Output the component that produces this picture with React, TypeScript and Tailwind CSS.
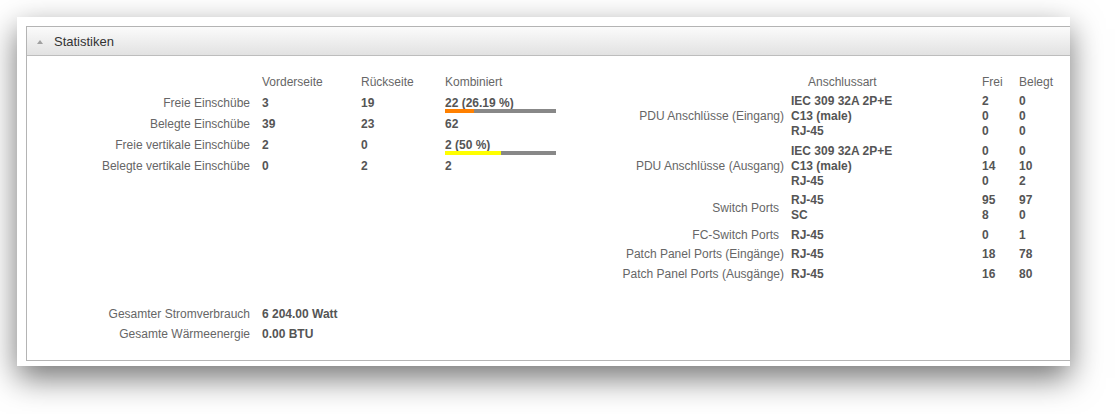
import React from 'react';

type PortRow = {
  label: string;
  paren: boolean;
  items: { type: string; free: string; used: string }[];
};

const bayRows = [
  { label: 'Freie Einschübe', front: '3', back: '19', total: '22 (26.19 %)', bar: 26.19, color: 'bg-[#ff8000]' },
  { label: 'Belegte Einschübe', front: '39', back: '23', total: '62' },
  { label: 'Freie vertikale Einschübe', front: '2', back: '0', total: '2 (50 %)', bar: 50, color: 'bg-[#ffff00]' },
  { label: 'Belegte vertikale Einschübe', front: '0', back: '2', total: '2' },
];

const portRows: PortRow[] = [
  {
    label: 'PDU Anschlüsse (Eingang)',
    paren: true,
    items: [
      { type: 'IEC 309 32A 2P+E', free: '2', used: '0' },
      { type: 'C13 (male)', free: '0', used: '0' },
      { type: 'RJ-45', free: '0', used: '0' },
    ],
  },
  {
    label: 'PDU Anschlüsse (Ausgang)',
    paren: true,
    items: [
      { type: 'IEC 309 32A 2P+E', free: '0', used: '0' },
      { type: 'C13 (male)', free: '14', used: '10' },
      { type: 'RJ-45', free: '0', used: '2' },
    ],
  },
  {
    label: 'Switch Ports',
    paren: false,
    items: [
      { type: 'RJ-45', free: '95', used: '97' },
      { type: 'SC', free: '8', used: '0' },
    ],
  },
  { label: 'FC-Switch Ports', paren: false, items: [{ type: 'RJ-45', free: '0', used: '1' }] },
  { label: 'Patch Panel Ports (Eingänge)', paren: true, items: [{ type: 'RJ-45', free: '18', used: '78' }] },
  { label: 'Patch Panel Ports (Ausgänge)', paren: true, items: [{ type: 'RJ-45', free: '16', used: '80' }] },
];

function BayTable() {
  return (
    <div className="grid grid-cols-[235px_99px_84px_111px] auto-rows-[21px] shrink-0">
      <div />
      <div className="flex items-center">Vorderseite</div>
      <div className="flex items-center">Rückseite</div>
      <div className="flex items-center">Kombiniert</div>
      {bayRows.map((r) => (
        <React.Fragment key={r.label}>
          <div className="flex items-center justify-end pr-[12px] whitespace-nowrap">{r.label}</div>
          <div className="flex items-center font-bold text-[#555555]">{r.front}</div>
          <div className="flex items-center font-bold text-[#555555]">{r.back}</div>
          {r.bar !== undefined ? (
            <div className="flex flex-col pt-[3px] font-bold text-[#555555]">
              <span>{r.total}</span>
              <div className="mt-[-2px] flex h-[4px] w-[111px] bg-[#888888]">
                <div className={`h-full ${r.color}`} style={{ width: `${r.bar}%` }} />
              </div>
            </div>
          ) : (
            <div className="flex items-center font-bold text-[#555555]">{r.total}</div>
          )}
        </React.Fragment>
      ))}
    </div>
  );
}

function PortTable() {
  return (
    <div className="grid grid-cols-[235px_191px_37px_60px] shrink-0">
      <div className="h-[20px]" />
      <div className="flex h-[20px] items-center pl-[17px]">Anschlussart</div>
      <div className="flex h-[20px] items-center">Frei</div>
      <div className="flex h-[20px] items-center">Belegt</div>
      {portRows.map((r) => (
        <React.Fragment key={r.label}>
          <div
            className={`flex items-center justify-end whitespace-nowrap pt-[2px] pb-[2.5px] ${
              r.paren ? 'pr-[7px]' : 'pr-[12px]'
            }`}
          >
            {r.label}
          </div>
          <div className="flex flex-col pt-[2px] pb-[2.5px] font-bold text-[#555555]">
            {r.items.map((i, k) => (
              <span key={k} className="whitespace-nowrap">
                {i.type}
              </span>
            ))}
          </div>
          <div className="flex flex-col pt-[2px] pb-[2.5px] font-bold text-[#555555]">
            {r.items.map((i, k) => (
              <span key={k}>{i.free}</span>
            ))}
          </div>
          <div className="flex flex-col pt-[2px] pb-[2.5px] font-bold text-[#555555]">
            {r.items.map((i, k) => (
              <span key={k}>{i.used}</span>
            ))}
          </div>
        </React.Fragment>
      ))}
    </div>
  );
}

export default function App() {
  return (
    <div
      className="h-[414px] w-[1118px] overflow-hidden bg-white pt-[17px] pl-[17px] text-[12px] leading-[15px] text-[#666666]"
      style={{ fontFamily: '"Liberation Sans", Arial, sans-serif' }}
    >
      <div className="h-[349px] w-[1053px] overflow-hidden bg-white pt-[9px] pl-[9px] shadow-[0_12px_30px_rgba(0,0,0,0.55)]">
        <section className="w-[1100px] border border-[#b4b4b4]">
          <header className="flex h-[29px] items-center gap-[11px] border-b border-[#bdbdbd] bg-gradient-to-b from-[#fbfbfb] to-[#e2e2e2] pl-[10px]">
            <svg width="6" height="4" viewBox="0 0 6 4" className="mt-[1px]">
              <polygon points="3,0 6,4 0,4" fill="#a0a0a0" />
            </svg>
            <h2 className="text-[13px] font-normal text-[#333333]">Statistiken</h2>
          </header>
          <div className="flex h-[304px] flex-col pt-[16px] pb-[16px]">
            <div className="flex">
              <BayTable />
              <PortTable />
            </div>
            <div className="mt-auto grid grid-cols-[235px_200px] auto-rows-[20px]">
              <div className="flex items-center justify-end pr-[12px]">Gesamter Stromverbrauch</div>
              <div className="flex items-center font-bold text-[#555555]">6 204.00 Watt</div>
              <div className="flex items-center justify-end pr-[12px]">Gesamte Wärmeenergie</div>
              <div className="flex items-center font-bold text-[#555555]">0.00 BTU</div>
            </div>
          </div>
        </section>
      </div>
    </div>
  );
}
